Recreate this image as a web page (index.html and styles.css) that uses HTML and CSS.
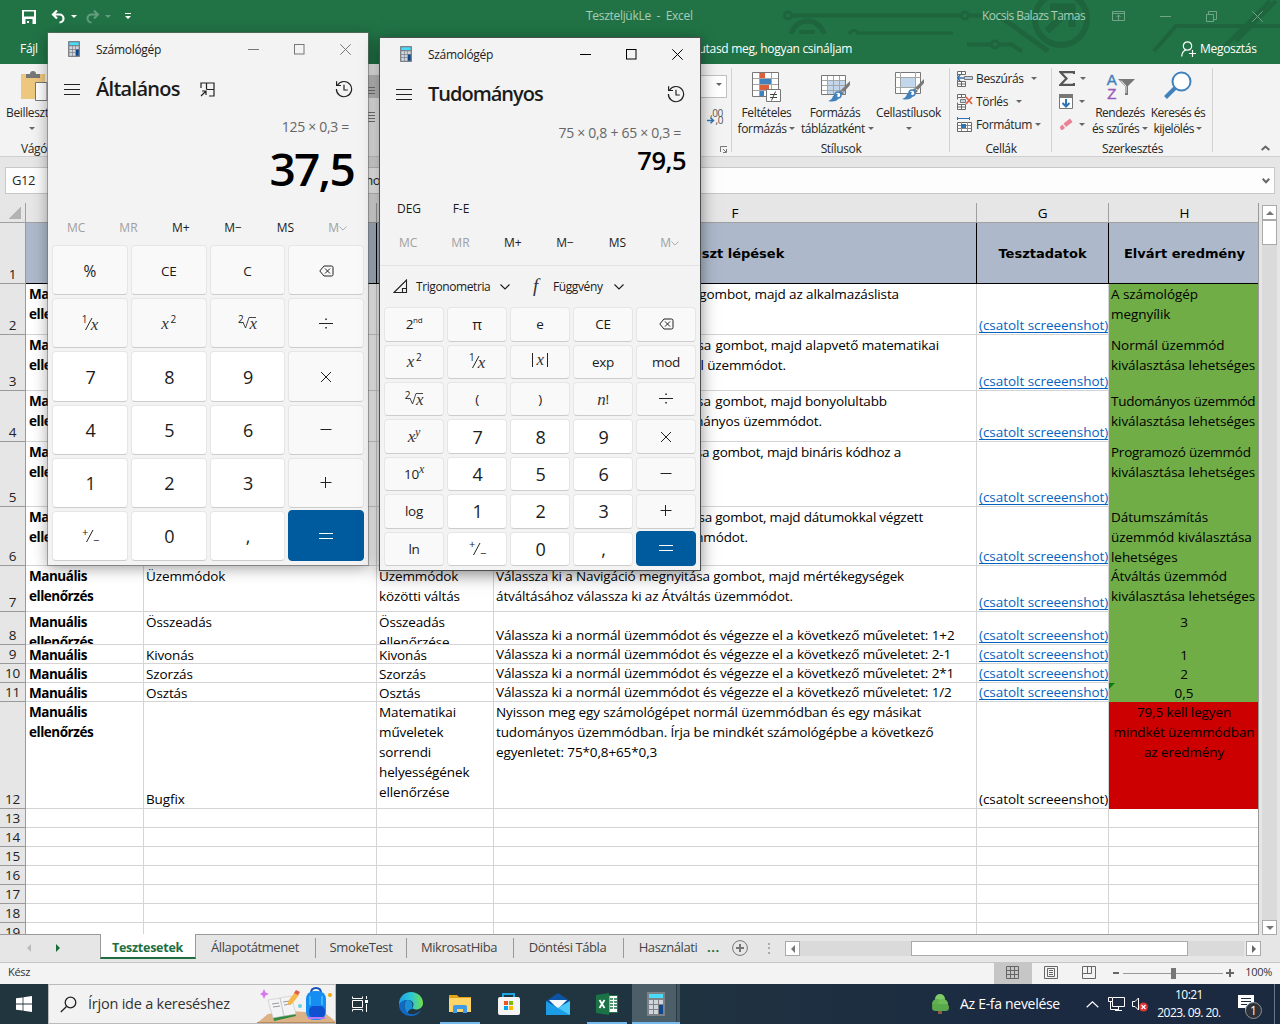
FILE: index.html
```html
<!DOCTYPE html>
<html lang="hu">
<head>
<meta charset="utf-8">
<title>TeszteljükLe - Excel</title>
<link rel="stylesheet" href="styles.css">
</head>
<body>
<svg width="0" height="0" class="defs">
  <defs>
    <symbol id="calc-icon" viewBox="0 0 18 24"><rect width="18" height="24" rx="1" fill="#7c8288"/><rect x="2" y="2" width="14" height="4" fill="#48dcfb"/><g fill="#cfd4da"><path d="M2 8h4v4H2zM7 8h4v4H7zM12 8h4v4h-4zM2 13h4v4H2zM7 13h4v4H7zM2 18h4v4H2zM7 18h4v4H7z"/></g><rect x="12" y="13" width="4" height="9" fill="#0f478c"/></symbol>
    <symbol id="menu" viewBox="0 0 16 12"><path d="M0 1.5h16M0 6.5h16M0 11.5h16" stroke="#222" fill="none"/></symbol>
    <symbol id="history" viewBox="0 0 18 18"><path d="M2.6 5A7.6 7.6 0 1 1 1.4 9M1.6 1.3V5.5H6M9 4.8V10h3.8" stroke="#222" stroke-width="1.2" fill="none"/></symbol>
    <symbol id="win-min" viewBox="0 0 11 11"><path d="M0 5.5h11" stroke="currentColor"/></symbol>
    <symbol id="win-max" viewBox="0 0 11 11"><rect x=".5" y=".5" width="9.5" height="9.5" fill="none" stroke="currentColor"/></symbol>
    <symbol id="win-close" viewBox="0 0 11 11"><path d="M.3.3l10.4 10.4M10.7.3L.3 10.7" stroke="currentColor"/></symbol>
    <symbol id="back" viewBox="0 0 15 12"><path d="M5 1h7.500q1.500 0 1.500 1.500v7q0 1.500-1.500 1.500H5L.8 6zM6 3.500l5 5M11 3.500l-5 5" stroke="#222" fill="none"/></symbol>
    <symbol id="div" viewBox="0 0 14 12"><path d="M0 5.500h14" stroke="#222"/><path d="M6.300 .5h1.500V2H6.300zM6.300 9h1.500v1.500H6.300z" fill="#222"/></symbol>
    <symbol id="mul" viewBox="0 0 14 12"><path d="M2 1l10 10M12 1L2 11" stroke="#222"/></symbol>
    <symbol id="sub" viewBox="0 0 14 12"><path d="M1.500 5.500h11" stroke="#222"/></symbol>
    <symbol id="add" viewBox="0 0 14 12"><path d="M1.500 5.500h11M6.500 0v11" stroke="#222"/></symbol>
    <symbol id="eq" viewBox="0 0 14 12"><path d="M0 3.500h14M0 8.500h14" stroke="#fff"/></symbol>
    <symbol id="chev" viewBox="0 0 10 6"><path d="M.5.5L5 5 9.500.5" fill="none" stroke="currentColor" stroke-width="1.100"/></symbol>
    <symbol id="slash" viewBox="0 0 8 14"><path d="M.5 13L7 1" stroke="#222" fill="none"/></symbol>
    <symbol id="root" viewBox="0 0 18 16"><path d="M3.500 9l1.500-.8L7.500 14 11 3.500h7" fill="none" stroke="#333" stroke-width=".9"/></symbol>
    <symbol id="cells" viewBox="0 0 16 16"><path d="M.5.5h8v3h-8zM4.500.5v3M.5 10.500h8v5h-8zM4.500 10.500v5M.5 13h8M.5 3.500v2M.5 8.500v2" fill="#fff" stroke="#6a6a6a"/></symbol>
    <symbol id="brush" viewBox="0 0 23 21"><path d="M22 0v4l-6 7-3-2z" fill="#7a7a7a"/><path d="M12 9l4 3-2 2-3-3z" fill="#7a7a7a"/><circle cx="10" cy="14" r="3" fill="#fff" stroke="#4182bd" stroke-width="1.500"/><path d="M0 20q4-1 5-5 3-3 5-2-2 3 1 4-3 5-11 3z" fill="#4182bd"/></symbol>
  </defs>
</svg>

<div class="desktop">
<header class="titlebar">
  <svg class="circuit" viewBox="0 0 500 64" width="500" height="64" fill="none" stroke="#1e653d" stroke-width="4">
    <circle cx="8" cy="15.500" r="3.500" stroke-width="3"/><path d="M12 15.500h169M190 15.500h19"/><circle cx="185" cy="15.500" r="3.500" stroke-width="3"/>
    <path d="M11 34a17 17 0 0 1 33 0" stroke-width="5"/><path d="M19 32h16"/><path d="M69 34a5 5 0 0 1 9-1h95" stroke-width="3"/>
    <path d="M187 44.500h24M220 44.500h12l10 7"/><circle cx="215" cy="44.500" r="3.500" stroke-width="3"/>
    <path d="M218 15l50 36" stroke-width="5"/>
    <circle cx="281" cy="19" r="26" stroke-width="6"/><path d="M267 31l25-24M270 7h22v20" stroke-width="7"/>
    <path d="M374 51l22-25h106M440 51l50-50M456 41l40-40" stroke-width="4"/>
  </svg>
  <div class="quick">
    <svg width="16" height="16" viewBox="0 0 16 16"><path d="M1 1h14v14H1z" fill="#fff"/><path d="M3 2.500h10v5H3zM4.500 10h7v5h-7z" fill="#217346"/><path d="M6 12h2v2H6z" fill="#fff"/></svg>
    <svg width="26" height="14" viewBox="0 0 26 14"><path d="M2 4.500h6.500a4 4 0 0 1 0 8M6 .5L2 4.500l4 4" stroke="#fff" stroke-width="2.200" fill="none"/><path d="M20 5h6l-3 3z" fill="#fff"/></svg>
    <svg width="26" height="14" viewBox="0 0 26 14" opacity=".3"><path d="M13 4.500H6.500a4 4 0 0 0 0 8M9 .5l4 4-4 4" stroke="#fff" stroke-width="2" fill="none"/><path d="M20 5h6l-3 3z" fill="#fff"/></svg>
    <svg width="6" height="7" viewBox="0 0 6 7"><path d="M0 0h6v1H0zM0 3h6L3 6z" fill="#fff"/></svg>
  </div>
  <div class="doc-title">TeszteljükLe&nbsp; -&nbsp; Excel</div>
  <div class="user">Kocsis Balazs Tamas</div>
  <div class="xl-controls">
    <svg width="13" height="10" viewBox="0 0 13 10" fill="none" stroke="currentColor"><path d="M.5.5h12v9H.5zM.5 2.500h12M6.500 9V4M4.500 6l2-2 2 2"/></svg>
    <svg width="11" height="11"><use href="#win-min"/></svg>
    <svg width="11" height="11" viewBox="0 0 11 11" fill="none" stroke="currentColor"><path d="M.5 3.500h7v7h-7zM2.500 3V.5h8v8H8"/></svg>
    <svg width="11" height="11"><use href="#win-close"/></svg>
  </div>
  <div class="menu-file">Fájl</div>
  <div class="menu-tell">Mutasd meg, hogyan csináljam</div>
  <div class="share"><svg width="15" height="16" viewBox="0 0 15 16" fill="none" stroke="#fff" stroke-width="1.200"><circle cx="6.500" cy="5" r="4.200"/><path d="M.7 15.500q.3-5 4-6.500M8 12.500h7M11.500 9v7"/></svg>Megosztás</div>
</header>

<section class="ribbon">
  <div class="group g-clip">
    <svg class="clip" width="30" height="30" viewBox="0 0 30 30"><path d="M0 3h24v25H0z" fill="#eec77f"/><path d="M5 7V3h4q0-3 3-3t3 3h4v4z" fill="#777"/><path d="M14.500 11.500H26V29.500H14.500z" fill="#fff" stroke="#777"/></svg>
    <div class="paste">Beillesztés</div><i class="caret mid"></i>
    <div class="cap">Vágólap</div>
  </div>
  <div class="group g-align"><div class="al on"><b></b><b></b><b></b></div><div class="al"><b></b><b></b><b></b><b></b></div></div>
  <div class="group g-num">
    <div class="combo"><i class="caret"></i></div>
    <div class="dec"><span>,00</span><span><svg width="8" height="7" viewBox="0 0 8 7"><path d="M0 3.500h6M3.500 .8L6.500 3.500 3.500 6.200" fill="none" stroke="#2f75b5" stroke-width="1.500"/></svg>,0</span></div>
    <svg width="7" height="7" viewBox="0 0 7 7" class="launch"><path d="M.5 6V.5H7M3 3l3 3M6.500 3v3.500H3" fill="none" stroke="#777"/></svg>
  </div>
  <div class="group g-styles">
    <div class="bigs">
      <div class="big b1"><svg width="32" height="32" viewBox="0 0 32 32"><path d="M1.500 1.500h26v24h-26z" fill="#fff"/><path d="M9 2h5v5H9zM9 14h9v5H9z" fill="#d9603b"/><path d="M9 8h11v5H9zM9 20h4v5H9z" fill="#4182bd"/><path d="M1.500 7.500h26M1.500 13.500h26M1.500 19.500h26M8.500 1v24M20.500 1v24" stroke="#a6a6a6" fill="none"/><path d="M1.500 1.500h26v24h-26z" fill="none" stroke="#777"/><path d="M15.500 18.500h14v12h-14z" fill="#fff" stroke="#777"/><path d="M19 23.500h7M19 26.500h7M24.500 20.500l-4 9" stroke="#444"/></svg>Feltételes<br>formázás <i class="caret"></i></div>
      <div class="big b2"><svg width="32" height="32" viewBox="0 0 32 32"><path d="M2.500 4.500h24v19h-24z" fill="#fff"/><path d="M9 9h17v14H9z" fill="#c2d6ec"/><path d="M2.500 9.500h24M2.500 14.500h24M2.500 19.500h24M8.500 4v19M14.500 4v19M20.500 4v19" stroke="#a6a6a6"/><path d="M2.500 4.500h24v19h-24z" fill="none" stroke="#777"/><svg x="9" y="10" width="23" height="21"><use href="#brush"/></svg></svg>Formázás<br>táblázatként <i class="caret"></i></div>
      <div class="big b3"><svg width="32" height="32" viewBox="0 0 32 32"><path d="M2.500 1.500h25v21h-25z" fill="#fff" stroke="#777"/><path d="M2.500 6.500h25M2.500 16.500h25M7.500 1v21M22.500 1v21" stroke="#a6a6a6"/><path d="M8 7h14v9H8z" fill="#c2d6ec"/><svg x="9" y="8" width="23" height="21"><use href="#brush"/></svg></svg>Cellastílusok<br><i class="caret"></i></div>
    </div>
    <div class="cap">Stílusok</div>
  </div>
  <div class="group g-cells">
    <div class="smalls">
      <div><svg width="16" height="16" viewBox="0 0 16 16"><use href="#cells"/><path d="M7.500 5.500h8v3h-8z" fill="#c2d6ec" stroke="#777"/><path d="M0 7h7M3 4L.5 7 3 10" stroke="#2f75b5" stroke-width="1.500" fill="none"/></svg>Beszúrás<i class="caret c1"></i></div>
      <div><svg width="16" height="16" viewBox="0 0 16 16"><use href="#cells"/><path d="M3.500 5.500h5v3h-5z" fill="#c2d6ec" stroke="#777"/><path d="M9 3l6 7M15 3L9 10" stroke="#df6242" stroke-width="1.800"/></svg>Törlés<i class="caret c2"></i></div>
      <div><svg width="16" height="16" viewBox="0 0 16 16"><path d="M.5 5.500h14v9H.5z" fill="#fff" stroke="#666"/><path d="M.5 8.500h14M.5 11.500h14M4.500 5v9M10.500 5v9" stroke="#888"/><path d="M4 7h5v4H4z" fill="#2f75b5"/><path d="M.5 0v3M12.500 0v3M1 1.500h11" stroke="#2f75b5"/></svg>Formátum<i class="caret c3"></i></div>
    </div>
    <div class="cap">Cellák</div>
  </div>
  <div class="group g-edit">
    <div class="edit-row">
      <div class="edit-small">
        <div><svg width="16" height="15" viewBox="0 0 16 15"><path d="M15 3V1.200H1.500l6 6.300-6 6.300H15V12" fill="none" stroke="#555" stroke-width="2.200"/></svg><i class="caret"></i></div>
        <div><svg width="15" height="15" viewBox="0 0 15 15"><path d="M.5.5h13v14H.5z" fill="#fff" stroke="#777"/><path d="M0 0h14v4H0z" fill="#777"/><path d="M7 5v7M3.500 9L7 12.500 10.500 9" stroke="#2f75b5" stroke-width="2" fill="none"/></svg><i class="caret"></i></div>
        <div><svg width="15" height="13" viewBox="0 0 15 13"><path d="M4.500 5.500L11 .5l2.500 3.500L7 9z" fill="#ea8295"/><path d="M3.500 6.500L6 10l-2.500 2H2L.8 9z" fill="#ea8295"/></svg><i class="caret"></i></div>
      </div>
      <div class="big b4"><div class="az"><span class="a">A<br><b>Z</b></span><svg width="17" height="16" viewBox="0 0 17 16"><path d="M0 0h17L10 7v9H7V7z" fill="#777"/><path d="M3 1.500l5 5.500v7" stroke="#eee" fill="none"/></svg></div>Rendezés<br>és szűrés <i class="caret"></i></div>
      <div class="big b5"><svg width="32" height="32" viewBox="0 0 32 32"><circle cx="19.500" cy="10.500" r="9" fill="#fff" stroke="#4182bd" stroke-width="2"/><path d="M13 17L3.500 26.500" stroke="#4182bd" stroke-width="4"/></svg>Keresés és<br>kijelölés <i class="caret"></i></div>
    </div>
    <div class="cap">Szerkesztés</div>
  </div>
  <div class="collapse"><svg width="9" height="6" viewBox="0 0 9 6"><path d="M.7 5L4.500 1.500 8.300 5" fill="none" stroke="#666" stroke-width="2"/></svg></div>
</section>

<section class="formula"><div class="namebox">G12</div><div class="fx"><span>(csatolt screeenshot)</span><svg width="8" height="6" viewBox="0 0 8 6"><path d="M.7.8L4 4.200 7.300.8" fill="none" stroke="#666" stroke-width="2"/></svg></div></section>

<section class="grid-area">
  <div class="sheet">
    <div class="row heads"><span class="corner"></span><span></span><span></span><span></span><span>F</span><span>G</span><span>H</span></div>
    <div class="row r1"><b>1</b><span></span><span></span><span></span><span>Teszt lépések</span><span>Tesztadatok</span><span>Elvárt eredmény</span></div>
    <div class="row h51"><b>2</b><span class="s">Manuális<br>ellenőrzés</span><span></span><span></span><span><q class="e1">gombot, majd az alkalmazáslista</q></span><span class="lk"><a>(csatolt screeenshot)</a></span><span class="ok">A számológép<br>megnyílik</span></div>
    <div class="row h56"><b>3</b><span class="s">Manuális<br>ellenőrzés</span><span></span><span></span><span><q class="e2">megnyitása<u>&nbsp;</u> gombot, majd alapvető matematikai</q><q class="e3">Normál üzemmódot.</q></span><span class="lk"><a>(csatolt screeenshot)</a></span><span class="ok">Normál üzemmód<br>kiválasztása lehetséges</span></div>
    <div class="row h51"><b>4</b><span class="s">Manuális<br>ellenőrzés</span><span></span><span></span><span><q class="e4">megnyitása<u>&nbsp;</u> gombot, majd bonyolultabb</q><q class="e5">Tudományos üzemmódot.</q></span><span class="lk"><a>(csatolt screeenshot)</a></span><span class="ok"><span class="tight">Tudományos üzemmód</span><br>kiválasztása lehetséges</span></div>
    <div class="row h65"><b>5</b><span class="s">Manuális<br>ellenőrzés</span><span></span><span></span><span><q class="e6">megnyitása gombot, majd bináris kódhoz a</q></span><span class="lk"><a>(csatolt screeenshot)</a></span><span class="ok"><span class="tight">Programozó üzemmód</span><br>kiválasztása lehetséges</span></div>
    <div class="row h59"><b>6</b><span class="s">Manuális<br>ellenőrzés</span><span></span><span></span><span><q class="e7">megnyitása gombot, majd dátumokkal végzett</q><q class="e8">üzemmódot.</q></span><span class="lk"><a>(csatolt screeenshot)</a></span><span class="ok">Dátumszámítás<br>üzemmód kiválasztása<br>lehetséges</span></div>
    <div class="row h46"><b>7</b><span class="s">Manuális<br>ellenőrzés</span><span>Üzemmódok</span><span>Üzemmódok<br>közötti váltás</span><span>Válassza ki a Navigáció megnyitása gombot, majd mértékegységek<br>átváltásához válassza ki az Átváltás üzemmódot.</span><span class="lk"><a>(csatolt screeenshot)</a></span><span class="ok">Átváltás üzemmód<br>kiválasztása lehetséges</span></div>
    <div class="row h33"><b>8</b><span class="s">Manuális<br>ellenőrzés</span><span>Összeadás</span><span>Összeadás<br>ellenőrzése</span><span class="lo">Válassza ki a normál üzemmódot és végezze el a következő műveletet: 1+2</span><span class="lk"><a>(csatolt screeenshot)</a></span><span class="ok c">3</span></div>
    <div class="row"><b>9</b><span class="s">Manuális</span><span>Kivonás</span><span>Kivonás</span><span class="lo">Válassza ki a normál üzemmódot és végezze el a következő műveletet: 2-1</span><span class="lk"><a>(csatolt screeenshot)</a></span><span class="ok c">1</span></div>
    <div class="row"><b>10</b><span class="s">Manuális</span><span>Szorzás</span><span>Szorzás</span><span class="lo">Válassza ki a normál üzemmódot és végezze el a következő műveletet: 2*1</span><span class="lk"><a>(csatolt screeenshot)</a></span><span class="ok c">2</span></div>
    <div class="row"><b>11</b><span class="s">Manuális</span><span>Osztás</span><span>Osztás</span><span class="lo">Válassza ki a normál üzemmódot és végezze el a következő műveletet: 1/2</span><span class="lk"><a>(csatolt screeenshot)</a></span><span class="ok c flag">0,5</span></div>
    <div class="row h107"><b>12</b><span class="s">Manuális<br>ellenőrzés</span><span class="lo">Bugfix</span><span>Matematikai<br>műveletek<br>sorrendi<br>helyességének<br>ellenőrzése</span><span>Nyisson meg egy számológépet normál üzemmódban és egy másikat<br>tudományos üzemmódban. Írja be mindkét számológépbe a következő<br>egyenletet: 75*0,8+65*0,3</span><span class="lk">(csatolt screeenshot)</span><span class="bad c">79,5 kell legyen<br>mindkét üzemmódban<br>az eredmény</span></div>
    <div class="row"><b>13</b><span></span><span></span><span></span><span></span><span></span><span></span></div>
    <div class="row"><b>14</b><span></span><span></span><span></span><span></span><span></span><span></span></div>
    <div class="row"><b>15</b><span></span><span></span><span></span><span></span><span></span><span></span></div>
    <div class="row"><b>16</b><span></span><span></span><span></span><span></span><span></span><span></span></div>
    <div class="row"><b>17</b><span></span><span></span><span></span><span></span><span></span><span></span></div>
    <div class="row"><b>18</b><span></span><span></span><span></span><span></span><span></span><span></span></div>
    <div class="row last"><b>19</b><span></span><span></span><span></span><span></span><span></span><span></span></div>
  </div>
  <div class="vscroll"><div class="sb"><i class="up"></i></div><div class="vthumb"></div><div class="sb dn"><i class="down"></i></div></div>
</section>

<nav class="tabs">
  <div class="tnav"><i class="left off"></i><i class="right"></i></div>
  <div class="tab active">Tesztesetek</div>
  <div class="tab t2">Állapotátmenet</div>
  <div class="tab t3">SmokeTest</div>
  <div class="tab t4">MikrosatHiba</div>
  <div class="tab t5">Döntési Tábla</div>
  <div class="tab t6">Használati</div>
  <div class="dots">...</div>
  <svg class="plus" width="16" height="16" viewBox="0 0 16 16" fill="none" stroke="#777"><circle cx="8" cy="8" r="7.400"/><path d="M4 8h8M8 4v8" stroke-width="2"/></svg>
  <div class="grip"></div>
  <div class="hscroll"><div class="sb"><i class="left"></i></div><div class="htrack"><div class="hthumb"></div></div><div class="sb"><i class="right g"></i></div></div>
</nav>

<footer class="status">
  <span class="ready">Kész</span>
  <div class="views">
    <div class="on"><svg width="13" height="13" viewBox="0 0 13 13" fill="none" stroke="#666"><path d="M.5.5h12v12H.5zM.5 4.500h12M.5 8.500h12M4.500.5v12M8.500.5v12"/></svg></div>
    <div><svg width="14" height="13" viewBox="0 0 14 13" fill="none" stroke="#666"><path d="M.5.5h13v12H.5zM3.500 2.500h7v8h-7zM5 4.500h4M5 6.500h4M5 8.500h4"/></svg></div>
    <div><svg width="14" height="13" viewBox="0 0 14 13" fill="none" stroke="#666"><path d="M.5.5h13v12H.5zM.5 7.500h9M5.500.5v7M9.500.5v7"/></svg></div>
  </div>
  <svg class="zoom" width="122" height="12" viewBox="0 0 122 12"><path d="M1 6h6M114 6h8M118 2v8" stroke="#666" stroke-width="2"/><path d="M11 6.500h100" stroke="#999"/><path d="M59 1h5v11h-5z" fill="#777"/></svg>
  <span class="pct">100%</span>
</footer>

<footer class="taskbar">
  <div class="start"><svg width="16" height="16" viewBox="0 0 16 16" fill="#fff"><path d="M0 2.300L6.600 1.400v6.200H0zM7.400 1.300L16 0v7.600H7.400zM0 8.400h6.600v6.200L0 13.700zM7.400 8.400H16V16l-8.600-1.300z"/></svg></div>
  <div class="search">
    <svg class="mag" width="17" height="17" viewBox="0 0 17 17" fill="none" stroke="#222" stroke-width="1.300"><circle cx="10.500" cy="6.500" r="5.300"/><path d="M6.500 10.500L.8 16"/></svg>
    <span>Írjon ide a kereséshez</span>
    <svg class="promo" width="78" height="36" viewBox="0 0 78 36">
      <path d="M0 36l11-9 20-3 37 2 10 8v2z" fill="#dbb185"/><path d="M0 35h78v1H0z" fill="#b98b5c"/>
      <path d="M7 2l1.500 3.500L12 7 8.500 8.500 7 12 5.500 8.500 3 7l2.500-1.500z" fill="#d876f0"/>
      <path d="M13 15l21-4 5 18-22 5z" fill="#2f8a3f"/><path d="M11 13l12-2 4 18-11 2zM23 11l11-2 5 18-12 2z" fill="#f4f4f6" stroke="#bbb" stroke-width=".5"/><path d="M15 17l7-1M16 20l7-1M26 15l7-1M27 18l7-1" stroke="#999"/>
      <path d="M30 18l2-5 6-8 4 3-7 9z" fill="#f7b84a"/><path d="M37 6l2-3 4 2-2 3z" fill="#e35b4b"/>
      <circle cx="43" cy="19" r="2" fill="#63d3e4"/><circle cx="73" cy="8" r="2" fill="#f5a800"/>
      <path d="M54 6q0-5 5-5t5 5" fill="none" stroke="#1552b8" stroke-width="2"/><rect x="49" y="4" width="20" height="29" rx="8" fill="#168df0"/><rect x="52" y="19" width="16" height="12" rx="5" fill="#0e50cf"/><path d="M51 31h17" stroke="#b87af4" stroke-width="2"/><path d="M53 9v9M65 9v9" stroke="#39b5ff" stroke-width="2"/>
    </svg>
  </div>
  <div class="app tv"><svg width="17" height="16" viewBox="0 0 17 16" fill="none" stroke="#fff"><path d="M.5.5v2h10v-2M.5 15.500v-2h10v2M.5 4.500h10v7H.5zM14.500 0v3M14.500 8v8"/><path d="M13 4h3v3h-3z" fill="#fff" stroke="none"/></svg></div>
  <div class="app a-edge"><svg width="24" height="24" viewBox="0 0 24 24"><defs><linearGradient id="eg" x1="0" x2="1"><stop offset="0" stop-color="#1ca3e8"/><stop offset=".5" stop-color="#2dc6d8"/><stop offset="1" stop-color="#6fe04a"/></linearGradient></defs><path d="M0 12C0 5 5 0 12 0s12 5 12 11c0 4-3 6.500-7 6.500-3 0-4-1.500-3-3 2-4-2-7-6-6.500C4 8.500 1 11 0 14z" fill="url(#eg)"/><path d="M0 13c1-3 4-5 8-5-4 3-4 10 1 13 4 2.500 9 1 13-3-2 4-6 6-10 6C5 24 0 19 0 13z" fill="#1268c4"/><path d="M8 8c3 0 6 2 5.500 5-.5 2 0 3 1 4-3-.5-5 1-6 4-4-4-4-10-.5-13z" fill="#178ed8"/></svg></div>
  <div class="app ul"><svg width="22" height="20" viewBox="0 0 22 20"><path d="M0 1h8l2 2h12v15H0z" fill="#e2a413"/><path d="M0 4h22v14H0z" fill="#ffd567"/><path d="M4 19v-6q0-2 2-2h10q2 0 2 2v6h-4v-4H8v4z" fill="#3f9be8"/></svg></div>
  <div class="app"><svg width="24" height="24" viewBox="0 0 24 24"><path d="M6 7V2h11v5" fill="none" stroke="#18a6e8" stroke-width="2"/><rect x="1" y="5" width="22" height="18" rx="2" fill="#f4f4f4"/><path d="M7 9h4v4H7z" fill="#f25022"/><path d="M12 9h4v4h-4z" fill="#7fba00"/><path d="M7 14h4v4H7z" fill="#00a4ef"/><path d="M12 14h4v4h-4z" fill="#ffb900"/></svg></div>
  <div class="app"><svg width="24" height="22" viewBox="0 0 24 22"><path d="M0 8l12-8 12 8-12 8z" fill="#0b54a5"/><path d="M3 7h18l-9 9z" fill="#f2f7fc"/><path d="M0 8l12 7 12-7v14H0z" fill="#1b9de8"/><path d="M24 8v14L12 15z" fill="#4cc8f8"/></svg></div>
  <div class="app ul xl"><svg width="22" height="22" viewBox="0 0 22 22"><path d="M13 2.500h8.500v17H13z" fill="#fff" stroke="#217346"/><path d="M14 6h3M18 6h3M14 9h3M18 9h3M14 12h3M18 12h3M14 15h3M18 15h3" stroke="#217346" stroke-width="1.300"/><path d="M0 2l13-2v22L0 20z" fill="#1b7244"/><path d="M3.500 7l5 8M8.500 7l-5 8" stroke="#fff" stroke-width="1.800"/></svg></div>
  <div class="app ul cur"><svg width="18" height="24"><use href="#calc-icon"/></svg></div>
  <div class="tray">
    <svg width="18" height="20" viewBox="0 0 18 20"><path d="M7 14h4v6H7z" fill="#8a5b45"/><circle cx="9" cy="5" r="5" fill="#7ecb68"/><circle cx="6" cy="10" r="5" fill="#5fb04e"/><circle cx="12" cy="10" r="5" fill="#6dbb58"/><rect x="1" y="10" width="17" height="7" rx="3.500" fill="#5aa84c"/></svg>
    <span class="wx">Az E-fa nevelése</span>
    <svg class="up-c" width="13" height="7" viewBox="0 0 13 7"><path d="M.7 6.300l5.800-5.500 5.800 5.500" fill="none" stroke="#fff" stroke-width="1.200"/></svg>
    <svg class="net" width="17" height="14" viewBox="0 0 17 14" fill="none" stroke="#fff"><path d="M5 .5h11.500v9h-12v-5M.5.500h4v4h-4zM2.500 5v7.500h8M10.500 10v3M7 13.500h7"/></svg>
    <svg class="snd" width="16" height="15" viewBox="0 0 16 15"><path d="M.5 4.500H3L6.500 1v12L3 9.500H.5z" fill="none" stroke="#fff"/><circle cx="11.500" cy="10" r="4.500" fill="#e03131"/><path d="M9.500 8l4 4M13.500 8l-4 4" stroke="#fff" stroke-width="1.300"/></svg>
    <div class="clock">10:21<br>2023. 09. 20.</div>
    <svg class="note" width="24" height="24" viewBox="0 0 24 24"><path d="M0 0h16v13h-5l-4 4v-4H0z" fill="#fff"/><path d="M3 3.500h10M3 6.500h10M3 9.500h6" stroke="#1c2c40"/><circle cx="15.500" cy="15.500" r="8" fill="#2c3238" stroke="#8b9298"/><text x="12" y="20" fill="#fff" font-size="12">1</text></svg>
    <i class="peek"></i>
  </div>
</footer>

<section class="calc calc1">
  <div class="bar"><svg class="ci" width="12" height="16"><use href="#calc-icon"/></svg><span class="nm">Számológép</span><svg width="11" height="11"><use href="#win-min"/></svg><svg width="11" height="11"><use href="#win-max"/></svg><svg width="11" height="11"><use href="#win-close"/></svg></div>
  <div class="mode"><svg width="16" height="12"><use href="#menu"/></svg><h2>Általános</h2><svg class="pin" width="15" height="15" viewBox="0 0 15 15" fill="none" stroke="#222" stroke-width="1.200"><path d="M1 6V1h13v13H9M6.500 1v5.500q0 1 1 1H14M1 14l5-5M2 9h4v4"/></svg><svg class="hist" width="18" height="18"><use href="#history"/></svg></div>
  <div class="expr">125 × 0,3 =</div>
  <div class="disp">37,5</div>
  <div class="mem"><i>MC</i><i>MR</i><span>M+</span><span>M−</span><span>MS</span><i>M<svg width="8" height="5" viewBox="0 0 10 6"><use href="#chev" width="10" height="6"/></svg></i></div>
  <div class="keys">
    <div class="pc">%</div><div>CE</div><div>C</div><div><svg width="15" height="12"><use href="#back"/></svg></div>
    <div class="m"><sup>1</sup><svg class="sl" width="8" height="14"><use href="#slash"/></svg><em class="fx-x">x</em></div><div class="m"><em>x</em>&thinsp;<sup>2</sup></div><div class="m rt"><sup>2</sup><em>x</em><svg width="18" height="16"><use href="#root"/></svg></div><div><svg width="14" height="12"><use href="#div"/></svg></div>
    <div class="n">7</div><div class="n">8</div><div class="n">9</div><div><svg width="14" height="12"><use href="#mul"/></svg></div>
    <div class="n">4</div><div class="n">5</div><div class="n">6</div><div><svg width="14" height="12"><use href="#sub"/></svg></div>
    <div class="n">1</div><div class="n">2</div><div class="n">3</div><div><svg width="14" height="12"><use href="#add"/></svg></div>
    <div class="n pm"><sup>+</sup><svg class="sl" width="8" height="14"><use href="#slash"/></svg><sub>−</sub></div><div class="n">0</div><div class="n">,</div><div class="eq"><svg width="14" height="12"><use href="#eq"/></svg></div>
  </div>
</section>

<section class="calc calc2">
  <div class="bar"><svg class="ci" width="12" height="16"><use href="#calc-icon"/></svg><span class="nm">Számológép</span><svg width="11" height="11"><use href="#win-min"/></svg><svg width="11" height="11"><use href="#win-max"/></svg><svg width="11" height="11"><use href="#win-close"/></svg></div>
  <div class="mode"><svg width="16" height="12"><use href="#menu"/></svg><h2>Tudományos</h2><svg class="hist" width="18" height="18"><use href="#history"/></svg></div>
  <div class="expr">75 × 0,8 + 65 × 0,3 =</div>
  <div class="disp">79,5</div>
  <div class="deg"><span>DEG</span><span>F-E</span></div>
  <div class="mem"><i>MC</i><i>MR</i><span>M+</span><span>M−</span><span>MS</span><i>M<svg width="8" height="5" viewBox="0 0 10 6"><use href="#chev" width="10" height="6"/></svg></i></div>
  <div class="funcs"><svg width="15" height="15" viewBox="0 0 15 15" fill="none" stroke="#222" stroke-width="1.100"><path d="M1 13.500L13.500 1v12.500zM9.500 13.500v-4h4"/></svg><span class="f1">Trigonometria</span><svg width="10" height="6"><use href="#chev"/></svg><em>f</em><span class="f2">Függvény</span><svg width="10" height="6"><use href="#chev"/></svg></div>
  <div class="keys">
    <div class="m">2<sup class="nd">nd</sup></div><div class="pi">π</div><div>e</div><div>CE</div><div><svg width="15" height="12"><use href="#back"/></svg></div>
    <div class="m"><em>x</em>&thinsp;<sup>2</sup></div><div class="m"><sup>1</sup><svg class="sl" width="8" height="14"><use href="#slash"/></svg><em class="fx-x">x</em></div><div class="m abs"><em>x</em></div><div>exp</div><div>mod</div>
    <div class="m rt"><sup>2</sup><em>x</em><svg width="18" height="16"><use href="#root"/></svg></div><div>(</div><div>)</div><div class="m"><em>n</em>!</div><div><svg width="14" height="12"><use href="#div"/></svg></div>
    <div class="m"><em>x</em><sup><em>y</em></sup></div><div class="n">7</div><div class="n">8</div><div class="n">9</div><div><svg width="14" height="12"><use href="#mul"/></svg></div>
    <div class="m">10<sup><em>x</em></sup></div><div class="n">4</div><div class="n">5</div><div class="n">6</div><div><svg width="14" height="12"><use href="#sub"/></svg></div>
    <div>log</div><div class="n">1</div><div class="n">2</div><div class="n">3</div><div><svg width="14" height="12"><use href="#add"/></svg></div>
    <div>ln</div><div class="n pm"><sup>+</sup><svg class="sl" width="8" height="14"><use href="#slash"/></svg><sub>−</sub></div><div class="n">0</div><div class="n">,</div><div class="eq"><svg width="14" height="12"><use href="#eq"/></svg></div>
  </div>
</section>
</div>
</body>
</html>
```
FILE: styles.css
```css
* { box-sizing: border-box; }
body { margin: 0; font: 12px/16px "Open Sans", "Noto Sans", sans-serif; color: #262626; }
.defs { position: absolute; }
.desktop { position: relative; width: 1280px; height: 1024px; overflow: hidden; display: flex; flex-direction: column; background: #e6e6e6; }
svg { flex: none; }
i { font-style: normal; }

/* title bar */
.titlebar { position: relative; height: 64px; flex: none; background: #217346; color: #a9cdb8; display: grid; grid-template-rows: 32px 32px; grid-template-columns: 586px 396px 131px 1fr; align-items: center; letter-spacing: -.3px; }
.circuit { position: absolute; left: 780px; top: 0; }
.titlebar > div { position: relative; white-space: nowrap; }
.quick { display: flex; align-items: center; padding: 1px 0 0 21px; gap: 14px; grid-column: 1; }
.quick svg:nth-child(3) { margin-left: -6px; }
.user { letter-spacing: -.53px; }
.xl-controls { display: flex; align-items: center; color: #72a588; gap: 35px; margin-left: -1px; }
.menu-file { padding: 2px 0 0 20px; color: #fff; }
.menu-tell { padding: 2px 0 0 102px; color: #fff; }
.share { grid-column: 4; padding: 2px 0 0 68px; color: #fff; display: flex; align-items: center; gap: 4px; }

/* ribbon */
.ribbon { flex: none; height: 93px; background: #f3f3f3; border-bottom: 1px solid #d0d0d0; display: flex; letter-spacing: -.35px; }
.group { position: relative; display: flex; flex-direction: column; white-space: nowrap; }
.group::after { content: ""; position: absolute; right: 0; top: 4px; bottom: 4px; width: 1px; background: #d2d2d2; }
.cap { margin-top: auto; text-align: center; line-height: 15px; }
.caret { display: inline-block; border: 3px solid transparent; border-top-color: #666; border-bottom: 0; vertical-align: 3px; }
.g-clip { width: 367px; padding: 7px 0 0 6px; }
.g-clip .clip { margin-left: 15px; }
.paste { margin-top: 4px; }
.g-clip .mid { margin: 6px 0 0 23px; width: 6px; }
.g-clip .cap { text-align: left; padding-left: 15px; }
.g-align { width: 13px; }
.al { height: 23px; margin-top: 11px; padding: 12px 5px 0 1px; display: flex; flex-direction: column; gap: 2px; }
.al.on { background: #c5c5c5; }
.al b { height: 1px; background: #777; flex: none; }
.al + .al { margin-top: 3px; padding-top: 11px; }
.g-num { width: 352px; align-items: flex-end; padding: 11px 5px 0 0; }
.combo { width: 90px; height: 23px; border: 1px solid #c0c0c0; background: #fff; text-align: right; padding: 1px 4px; }
.dec { font-size: 10px; line-height: 7px; margin: 12px 4px 0 0; display: flex; flex-direction: column; align-items: flex-end; color: #555; }
.launch { margin: 22px 0 0; }
.g-styles { width: 218px; padding-top: 7px; }
.bigs, .edit-row { display: flex; }
.big { text-align: center; line-height: 16px; flex: none; }
.big > svg, .az { display: block; margin: 0 auto 2px; }
.b1 { width: 69px; } .b2 { width: 68px; letter-spacing: -.45px; } .b3 { width: 79px; }
.b1 .caret, .b2 .caret { margin-left: 0; }
.bigs .b2 { text-indent: -2px; }
.g-cells { width: 102px; }
.smalls { display: flex; flex-direction: column; padding: 3px 0 0 7px; }
.smalls > div { height: 23px; display: flex; align-items: center; gap: 3px; }
.c1 { margin-left: 4px; } .c2 { margin-left: 5px; } .c3 { margin-left: 0; }
.g-edit { width: 161px; }
.edit-small { width: 39px; padding: 3px 0 0 7px; }
.edit-small div { height: 23px; display: flex; align-items: center; gap: 5px; }
.b4, .b5 { padding-top: 7px; width: 58px; letter-spacing: -.5px; }
.b4 .caret, .b5 .caret { margin-left: 0; }
.az { display: flex; width: 30px; height: 32px; align-items: center; }
.a { font: 15px/14px "Liberation Sans", sans-serif; color: #4182bd; width: 13px; -webkit-text-stroke: .4px; }
.a b { font-weight: 400; color: #9b57b8; }
.collapse { margin-left: auto; padding: 75px 10px 0 0; }

/* formula bar */
.formula { flex: none; height: 46px; padding: 10px 5px 9px; display: flex; }
.namebox, .fx { border: 1px solid #c8c8c8; background: #fdfdfd; font-size: 13px; line-height: 25px; letter-spacing: -.4px; }
.namebox { width: 200px; padding-left: 6px; }
.fx { flex: 1; margin-left: 20px; padding: 0 4px 0 45px; display: flex; align-items: center; justify-content: space-between; }

/* sheet */
.grid-area { flex: none; height: 732px; display: flex; }
.sheet { width: 1259px; border-right: 1px solid #9a9a9a; border-bottom: 1px solid #9a9a9a; font-size: 13.5px; line-height: 20px; letter-spacing: -.12px; color: #000; white-space: nowrap; overflow: hidden; }
.row { display: grid; grid-template-columns: 26px 118px 233px 117px 483px 132px 150px; height: 19px; background: #fff; }
.row > * { border: 0 solid #d4d4d4; border-width: 0 1px 1px 0; overflow: hidden; padding-left: 2px; }
.row > :last-child { border-right-color: transparent; }
.row > b { background: #e6e6e6; border-color: #9a9a9a; font-weight: 400; text-align: center; padding: 0; display: flex; align-items: flex-end; justify-content: center; line-height: 18px; color: #222; }
.row.heads { height: 20px; background: #e6e6e6; }
.heads span { text-align: center; border-color: #a0a0a0; font-size: 13.500px; padding: 0; }
.heads > :last-child { padding-left: 2px; }
.row.heads .corner { display: flex; justify-content: flex-end; padding: 4px 4px 3px; }
.corner::after { content: ""; width: 12px; height: 12px; background: linear-gradient(135deg, transparent 50%, #b3b3b3 50%); }
.r1 { height: 61px; }
.r1 span { background: #adb9ca; border-color: #000; display: flex; align-items: center; justify-content: center; font: bold 13px "DejaVu Sans", sans-serif; letter-spacing: 0; padding-left: 0; }
.row.r1 > :last-child { padding-left: 2px; border-right-color: #adb9ca; }
.h51 { height: 51px; } .h56 { height: 56px; } .h65 { height: 65px; } .h59 { height: 59px; } .h46 { height: 46px; } .h33 { height: 33px; } .h107 { height: 107px; }
.last { height: 12px; }
.last b { align-items: flex-start; }
.row > .s { font-weight: 700; letter-spacing: -.47px; padding-left: 3px; }
.row > .lk, .row > .lo { display: flex; align-items: flex-end; line-height: 18px; }
.row > .lk { letter-spacing: -.04px; }
.lk a { color: #0563c1; text-decoration: underline; text-underline-offset: 2px; }
.row > .ok { background: #70ad47; border-color: #70ad47; letter-spacing: -.05px; }
.ok .tight { letter-spacing: -.25px; }
.row > .bad { background: #c00; border-color: #c00; }
.row > .c { text-align: center; padding-left: 1px; }
.flag { background-image: linear-gradient(135deg, #0b7a10 4px, transparent 4.500px) !important; }
q { quotes: none; display: block; text-align: right; }
q u { text-decoration: none; letter-spacing: -2.500px; }
.e1 { width: 403px; } .e2 { width: 443px; } .e3 { width: 290px; } .e4 { width: 391px; } .e5 { width: 326px; } .e6 { width: 405px; } .e7 { width: 427px; } .e8 { width: 252px; }
.e6, .e7 { letter-spacing: -.22px; }

/* scroll bars */
.vscroll { margin: 2px 0 0 3px; width: 15px; height: 730px; background: #dadada; display: flex; flex-direction: column; }
.sb { width: 15px; height: 15px; background: #fff; border: 1px solid #aaa; display: flex; align-items: center; justify-content: center; flex: none; }
.vthumb { height: 25px; background: #fff; border: 1px solid #aaa; }
.sb.dn { margin-top: auto; }
.up, .down { border: 4px solid transparent; border-bottom-color: #777; border-top: 0; }
.down { border-top: 4px solid #777; border-bottom: 0; }
.left, .right { border: 4px solid transparent; border-right-color: #777; border-left: 0; }
.right { border-left: 4px solid #1a6b3c; border-right: 0; }
.right.g { border-left-color: #666; }
.left.off { border-right-color: #bbb; }

/* sheet tabs */
.tabs { flex: none; height: 28px; display: flex; font-size: 13px; border-bottom: 1px solid #c6c6c6; color: #444; letter-spacing: -.4px; }
.tnav { width: 100px; display: flex; align-items: center; padding: 0 0 2px 27px; gap: 25px; }
.tab { text-align: center; line-height: 25px; position: relative; white-space: nowrap; }
.tab:not(.active)::after { content: ""; position: absolute; right: 0; top: 3px; height: 20px; width: 1px; background: #999; }
.tab.active { width: 96px; margin-top: -1px; height: 25px; background: #fff; color: #1d6f42; font-weight: 700; border: 1px solid #999; border-width: 0 1px 2px; border-bottom-color: #1d6f42; font-size: 12.500px; line-height: 27px; letter-spacing: -.25px; padding-right: 1px; }
.t2 { width: 120px; padding-right: 2px; } .t3 { width: 91px; padding-right: 1px; } .t4 { width: 107px; padding-right: 3px; } .t5 { width: 110px; padding-right: 3px; }
.tab.t6 { width: 80px; padding-left: 8px; }
.tab.t6::after { display: none; }
.dots { width: 28px; color: #1d6f42; font-weight: 700; line-height: 24px; padding-left: 3px; letter-spacing: .5px; }
.plus { margin-top: 5px; }
.grip { width: 2px; margin: 8px 15px 0 20px; height: 11px; background: repeating-linear-gradient(#aaa 0 2px, transparent 2px 4.500px); }
.hscroll { display: flex; width: 476px; height: 15px; margin-top: 6px; }
.htrack { flex: 1; background: #dadada; padding-left: 111px; margin-right: 2px; }
.hthumb { width: 277px; height: 15px; background: #fff; border: 1px solid #aaa; }

/* status */
.status { flex: none; height: 21px; background: #f3f3f3; display: flex; align-items: center; padding: 0 8px; font-size: 11px; color: #333; letter-spacing: -.3px; }
.ready, .pct { padding-bottom: 3px; }
.views { margin-left: auto; display: flex; height: 21px; }
.views div { width: 38px; display: flex; align-items: center; justify-content: center; padding: 0 1px 2px 0; }
.views .on { background: #c6c6c6; }
.zoom { margin: 0 11px 2px 4px; }

/* taskbar */
.taskbar { flex: none; height: 40px; background: linear-gradient(90deg, #20353e, #203540 45%, #1b2a41 80%, #1c2a40); display: flex; color: #fff; }
.start { width: 48px; display: flex; align-items: center; justify-content: center; }
.search { width: 288px; background: #f2f2f2; border: 1px solid #bbb; display: flex; align-items: center; color: #333; font-size: 14.500px; letter-spacing: -.23px; }
.mag { margin: 0 11px 0 11px; }
.promo { margin: 2px 0 0 auto; }
.app { width: 49px; display: flex; align-items: center; justify-content: center; position: relative; }
.app.tv { width: 50px; padding-right: 1px; }
.ul::after { content: ""; position: absolute; bottom: 0; left: 5px; right: 4px; height: 2px; background: #76b9ed; }
.app.cur { width: 48px; margin-left: 1px; background: linear-gradient(90deg, #4c5f68 44px, #2a3b45 44px 45px, #43545d 45px); }
.cur::after { left: 0; right: 0; }
.tray { margin-left: auto; display: flex; align-items: center; font-size: 14px; letter-spacing: -.3px; white-space: nowrap; width: 349px; }
.wx { margin-left: 11px; width: 101px; }
.up-c { margin-left: 25px; } .net { margin-left: 9px; } .snd { margin-left: 7px; }
.clock { width: 80px; margin-left: 1px; text-align: center; font-size: 12px; line-height: 18px; letter-spacing: -.55px; }
.note { margin: 6px 0 0 9px; }
.peek { width: 1px; height: 40px; background: #6c7686; margin-left: 12px; }

/* calculator windows */
.calc { position: absolute; width: 320px; height: 532px; background: #f3f3f3; color: #1b1b1b; display: flex; flex-direction: column; box-shadow: 0 0 0 1px rgba(110,110,110,.55), 0 3px 14px rgba(0,0,0,.38); }
.calc1 { left: 48px; top: 33px; }
.calc2 { left: 380px; top: 38px; box-shadow: 0 0 0 1px #4c4f52, 0 4px 16px rgba(0,0,0,.5); }
.bar { height: 32px; display: flex; align-items: center; letter-spacing: -.3px; color: #777; }
.calc2 .bar { color: #000; padding-top: 1px; }
.bar .ci { margin: 0 17px 0 20px; }
.bar .nm { color: #1b1b1b; width: 151.500px; margin: 1px 0 0 -1px; }
.bar svg + svg { margin-left: 35px; }
.mode { height: 48px; display: flex; align-items: center; padding: 0 15px 0 16px; }
.mode h2 { margin: 0 0 0 16px; font-size: 20px; line-height: 24px; font-weight: 600; letter-spacing: -.7px; }
.calc2 .mode h2 { letter-spacing: -1px; }
.pin { margin-left: 20px; }
.hist { margin-left: auto; }
.expr { text-align: right; font-size: 14px; line-height: 20px; color: #666; padding: 4px 19px 0 0; letter-spacing: -.3px; }
.calc2 .expr { padding-top: 5px; line-height: 19px; }
.disp { text-align: right; font-size: 46px; line-height: 64px; font-weight: 600; color: #000; padding-right: 14px; letter-spacing: -1.700px; }
.calc1 .disp { line-height: 62px; padding-bottom: 2px; }
.calc2 .disp { font-size: 25.500px; line-height: 36px; letter-spacing: -.5px; }
.calc1 .mem { margin-top: 11px; }
.deg { display: flex; margin-top: 19px; height: 24px; align-items: center; padding-left: 3px; }
.deg span { width: 52px; text-align: center; }
.mem { display: flex; height: 32px; align-items: center; padding: 0 2px; }
.calc2 .mem { margin-top: 7px; }
.mem > * { width: 52.300px; text-align: center; flex: none; }
.mem i { color: #a0a0a0; }
.mem svg { vertical-align: 1px; }
.funcs { border-top: 1px solid #e2e2e2; margin-top: 6px; height: 42px; display: flex; align-items: center; padding-left: 13px; font-size: 12px; letter-spacing: -.4px; }
.funcs .f1 { margin-left: 8px; width: 84px; } .funcs .f2 { width: 61px; margin-left: 10px; }
.funcs em { font: italic 19px/20px "Liberation Serif", serif; color: #333; margin: -2px 0 0 23px; width: 10px; }
.keys { margin: auto 4px 4px; display: grid; grid-template-columns: repeat(4, 1fr); gap: 3px; height: 316px; grid-auto-rows: 1fr; font-size: 13.500px; }
.calc2 .keys { grid-template-columns: repeat(5, 1fr); height: 260px; }
.keys > div { background: #f9f9f9; border: 1px solid #e6e6e6; border-bottom-color: #ccc; border-radius: 4px; display: flex; align-items: center; justify-content: center; min-height: 0; position: relative; line-height: 18px; letter-spacing: -.3px; }
.calc1 .keys > div { padding-top: 1px; }
.keys > .n { background: #fff; font-size: 18px; padding-left: 1px; }
.keys > .eq { background: #005a9e; border-color: #005a9e; margin-top: -1px; }
.keys > .pc { font-size: 15.500px; }
.keys > .pi { font-size: 15px; }
.m em { font: italic 17px/17px "Liberation Serif", serif; color: #333; }
.m sup, .pm sup, .pm sub { font-size: 10px; line-height: 10px; align-self: center; margin-bottom: 9px; }
.pm sup, .pm sub { font-size: 11px; }
.pm sub { margin: 8px 0 0; }
.m sup em { font-size: 12px; }
.m sup.nd { font-size: 8px; }
.sl { margin: 0 -2.500px 0 -2px; }
.pm .sl { margin: 0 -1px 0 -2px; }
.fx-x { padding-top: 2px; }
.abs em { border: solid #222; border-width: 0 1px; padding: 0 3px; line-height: 13px; height: 14px; margin-top: -3px; }
.rt em { margin-left: 6px; }
.rt svg { position: absolute; left: calc(50% - 9px); top: calc(50% - 9px); }
```
